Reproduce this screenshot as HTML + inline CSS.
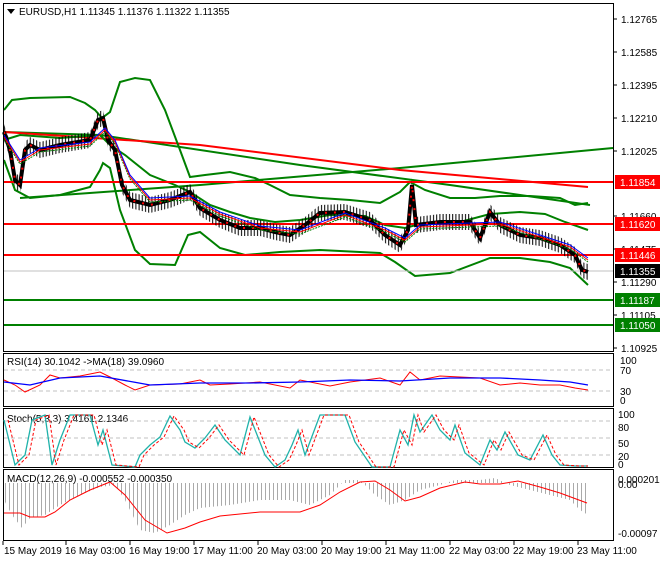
<!DOCTYPE html>
<html><head><meta charset="utf-8">
<style>
html,body{margin:0;padding:0;background:#fff;}
body{width:660px;height:560px;overflow:hidden;}
svg text{font-family:"Liberation Sans",sans-serif;font-size:10px;}
</style></head><body>
<svg width="660" height="560" xmlns="http://www.w3.org/2000/svg">
<defs>
<pattern id="wk" x="0" y="0" width="3.2" height="10" patternUnits="userSpaceOnUse"><rect x="1" y="0" width="1" height="10" fill="#000"/></pattern>
<pattern id="hb" x="0" y="0" width="4" height="10" patternUnits="userSpaceOnUse"><rect x="1" y="0" width="1" height="10" fill="#aaa"/></pattern>
</defs>
<rect width="660" height="560" fill="#fff"/>
<polyline fill="none" stroke="#008000" stroke-width="2" points="4,132 100,135 300,165 450,185 590,205"/>
<polyline fill="none" stroke="#008000" stroke-width="2" points="20,198 200,185 400,168 613,148"/>
<polyline fill="none" stroke="#f00" stroke-width="2" points="4,132 200,145 400,170 588,187"/>
<polyline fill="none" stroke="#008000" stroke-width="2" points="4,110 12,100 30,98 70,97 85,103 95,110 102,118 110,112 120,82 135,78 150,80 165,110 180,150 190,177 205,175 230,172 255,178 270,185 290,195 320,198 350,200 380,203 400,192 410,182 425,190 450,198 475,198 500,196 530,196 560,198 575,205 588,203"/>
<polyline fill="none" stroke="#008000" stroke-width="2" points="4,140 20,135 60,138 100,135 110,145 125,155 150,175 175,185 190,192 210,205 230,212 250,218 275,222 300,220 330,215 365,216 385,225 405,228 420,224 460,222 490,214 520,212 545,214 565,222 588,230"/>
<polyline fill="none" stroke="#008000" stroke-width="2" points="4,160 15,190 30,198 60,195 90,187 100,170 103,163 110,168 120,210 135,250 150,264 175,265 188,235 200,232 220,248 245,255 280,252 320,250 380,253 395,262 415,276 450,273 490,258 520,258 550,262 570,268 588,285"/>
<line x1="3" y1="182" x2="613" y2="182" stroke="#f00" stroke-width="2"/>
<line x1="3" y1="224" x2="613" y2="224" stroke="#f00" stroke-width="2"/>
<line x1="3" y1="255" x2="613" y2="255" stroke="#f00" stroke-width="2"/>
<line x1="3" y1="271" x2="613" y2="271" stroke="#c0c0c0"/>
<line x1="3" y1="300" x2="613" y2="300" stroke="#008000" stroke-width="2"/>
<line x1="3" y1="325" x2="613" y2="325" stroke="#008000" stroke-width="2"/>
<polygon fill="url(#wk)" points="4,124 10,142 15,172 20,177 25,142 30,137 40,142 60,137 90,132 98,112 103,110 108,132 115,142 122,177 130,192 150,197 170,192 190,184 200,200 220,212 240,220 260,220 275,224 290,227 305,217 320,205 345,204 370,212 385,227 400,237 408,222 412,177 416,217 440,214 470,214 480,230 490,204 500,217 520,227 540,230 560,237 575,247 582,262 588,264 588,280 582,278 575,263 560,253 540,246 520,243 500,233 490,220 480,246 470,230 440,230 416,233 412,193 408,238 400,253 385,243 370,228 345,220 320,221 305,233 290,243 275,240 260,236 240,236 220,228 200,216 190,200 170,208 150,213 130,208 122,193 115,158 108,148 103,126 98,128 90,148 60,153 40,158 30,153 25,158 20,193 15,188 10,158 4,140"/>
<polyline fill="none" stroke="#000" stroke-width="4" points="4,132 10,150 15,180 20,185 25,150 30,145 40,150 60,145 90,140 98,120 103,118 108,140 115,150 122,185 130,200 150,205 170,200 190,192 200,208 220,220 240,228 260,228 275,232 290,235 305,225 320,213 345,212 370,220 385,235 400,245 408,230 412,185 416,225 440,222 470,222 480,238 490,212 500,225 520,235 540,238 560,245 575,255 582,270 588,272"/>
<polyline fill="none" stroke="#f00" stroke-width="2" stroke-dasharray="2,7" points="4,132 10,150 15,180 20,185 25,150 30,145 40,150 60,145 90,140 98,120 103,118 108,140 115,150 122,185 130,200 150,205 170,200 190,192 200,208 220,220 240,228 260,228 275,232 290,235 305,225 320,213 345,212 370,220 385,235 400,245 408,230 412,185 416,225 440,222 470,222 480,238 490,212 500,225 520,235 540,238 560,245 575,255 582,270 588,272"/>
<polyline fill="none" stroke="#008000" stroke-dasharray="2,1" points="4,139 20,164 40,152 90,146 105,132 115,144 130,179 150,202 190,200 220,216 260,230 300,234 345,217 385,232 405,242 420,229 470,227 500,226 540,239 570,249 588,262"/>
<polyline fill="none" stroke="#f00" points="4,137 20,162 40,150 90,144 105,130 115,142 130,177 150,200 190,198 220,214 260,228 300,232 345,215 385,230 405,240 420,227 470,225 500,224 540,237 570,247 588,260"/>
<polyline fill="none" stroke="#00f" points="4,135 20,160 40,148 90,142 105,128 115,140 130,175 150,198 190,196 220,212 260,226 300,230 345,213 385,228 405,238 420,225 470,223 500,222 540,235 570,245 588,258"/>
<rect x="3.5" y="3.5" width="610" height="348" fill="none" stroke="#000"/>
<rect x="3.5" y="353.5" width="610" height="53" fill="none" stroke="#000"/>
<rect x="3.5" y="408.5" width="610" height="59" fill="none" stroke="#000"/>
<rect x="3.5" y="469.5" width="610" height="71" fill="none" stroke="#000"/>
<polygon points="7,9 15,9 11,14" fill="#000"/>
<text x="19" y="15" font-size="11">EURUSD,H1  1.11345 1.11376 1.11322 1.11355</text>
<g stroke="#000"><line x1="613" y1="19" x2="617" y2="19"/><line x1="613" y1="52" x2="617" y2="52"/><line x1="613" y1="85" x2="617" y2="85"/><line x1="613" y1="118" x2="617" y2="118"/><line x1="613" y1="151" x2="617" y2="151"/><line x1="613" y1="216" x2="617" y2="216"/><line x1="613" y1="249" x2="617" y2="249"/><line x1="613" y1="282" x2="617" y2="282"/><line x1="613" y1="315" x2="617" y2="315"/><line x1="613" y1="348" x2="617" y2="348"/></g>
<text x="621" y="23">1.12765</text><text x="621" y="56">1.12585</text><text x="621" y="89">1.12395</text><text x="621" y="122">1.12210</text><text x="621" y="155">1.12025</text><text x="621" y="220">1.11660</text><text x="621" y="253">1.11475</text><text x="621" y="286">1.11290</text><text x="621" y="319">1.11105</text><text x="621" y="352">1.10925</text>
<rect x="615" y="175" width="45" height="14" fill="#f00"/><text x="620" y="186" fill="#fff">1.11854</text>
<rect x="615" y="217" width="45" height="14" fill="#f00"/><text x="620" y="228" fill="#fff">1.11620</text>
<rect x="615" y="248" width="45" height="14" fill="#f00"/><text x="620" y="259" fill="#fff">1.11446</text>
<rect x="615" y="264" width="45" height="14" fill="#000"/><text x="620" y="275" fill="#fff">1.11355</text>
<rect x="615" y="293" width="45" height="14" fill="#008000"/><text x="620" y="304" fill="#fff">1.11187</text>
<rect x="615" y="318" width="45" height="14" fill="#008000"/><text x="620" y="329" fill="#fff">1.11050</text>
<text x="7" y="365">RSI(14) 30.1042  -&gt;MA(18) 39.0960</text>
<line x1="4" y1="370" x2="613" y2="370" stroke="#c0c0c0" stroke-dasharray="4,3"/>
<line x1="4" y1="391" x2="613" y2="391" stroke="#c0c0c0" stroke-dasharray="4,3"/>
<polyline fill="none" stroke="#f00" points="4,380 15,385 25,392 40,385 50,375 60,378 80,376 100,372 110,377 125,385 135,390 150,385 180,384 200,380 210,385 230,384 260,382 290,388 300,380 330,386 350,382 380,378 400,385 410,372 420,380 440,376 480,378 500,385 520,383 540,385 560,385 575,388 588,390"/>
<polyline fill="none" stroke="#00f" stroke-width="1.3" points="4,382 30,385 60,378 100,376 150,385 200,383 250,383 300,382 350,380 400,381 450,378 500,378 540,380 570,382 588,385"/>
<text x="620" y="364">100</text><text x="620" y="374">70</text><text x="620" y="395">30</text><text x="620" y="404">0</text>
<text x="7" y="422">Stoch(5,3,3) 3.4161 2.1346</text>
<line x1="4" y1="421" x2="613" y2="421" stroke="#c0c0c0" stroke-dasharray="4,3"/>
<line x1="4" y1="438" x2="613" y2="438" stroke="#c0c0c0" stroke-dasharray="4,3"/>
<line x1="4" y1="455" x2="613" y2="455" stroke="#c0c0c0" stroke-dasharray="4,3"/>
<polyline fill="none" stroke="#20b2aa" stroke-width="1.3" points="4,420 15,465 25,455 32,420 45,415 52,465 60,440 70,415 90,415 98,445 103,430 112,465 135,467 140,455 150,445 160,437 170,416 180,430 185,442 195,448 205,438 215,425 225,440 240,455 250,417 265,455 275,467 285,460 292,445 298,430 305,455 320,415 345,415 355,442 372,467 390,467 400,430 408,445 414,415 420,432 432,415 440,430 450,440 455,425 465,453 480,465 490,440 497,450 505,432 518,455 530,460 543,435 552,455 560,465 575,466 588,466"/>
<polyline fill="none" stroke="#f00" stroke-dasharray="3,2" points="8,420 19,465 29,455 36,420 49,415 56,465 64,440 74,415 94,415 102,445 107,430 116,465 139,467 144,455 154,445 164,437 174,416 184,430 189,442 199,448 209,438 219,425 229,440 244,455 254,417 269,455 279,467 289,460 296,445 302,430 309,455 324,415 349,415 359,442 376,467 394,467 404,430 412,445 418,415 424,432 436,415 444,430 454,440 459,425 469,453 484,465 494,440 501,450 509,432 522,455 534,460 547,435 556,455 564,465 579,466 588,466"/>
<text x="618" y="418">100</text><text x="618" y="431">80</text><text x="618" y="447">50</text><text x="618" y="460">20</text><text x="618" y="468">0</text>
<polygon fill="url(#hb)" points="4,483 588,483 588,515 580,510 570,500 550,495 530,490 510,485 495,478 480,480 455,480 440,485 420,490 405,500 390,505 375,495 360,480 345,480 330,495 310,505 290,500 260,500 230,505 200,508 185,515 170,525 155,533 140,530 125,500 115,485 100,487 80,495 60,505 45,515 30,518 22,528 12,515 4,500"/>
<polyline fill="none" stroke="#f00" points="4,513 20,513 30,517 45,517 55,512 70,500 90,490 110,482 125,495 145,520 167,533 185,528 200,522 220,516 260,512 300,512 320,505 340,492 360,482 375,481 390,490 405,501 420,497 440,488 465,482 480,484 500,484 518,481 540,487 560,493 587,503"/>
<text x="7" y="482">MACD(12,26,9) -0.000552 -0.000350</text>
<text x="618" y="483">0.000201</text><text x="618" y="488">0.00</text><text x="618" y="537">-0.00097</text>
<g stroke="#000"><line x1="3" y1="541" x2="3" y2="545"/><line x1="66" y1="541" x2="66" y2="545"/><line x1="130" y1="541" x2="130" y2="545"/><line x1="194" y1="541" x2="194" y2="545"/><line x1="258" y1="541" x2="258" y2="545"/><line x1="322" y1="541" x2="322" y2="545"/><line x1="386" y1="541" x2="386" y2="545"/><line x1="450" y1="541" x2="450" y2="545"/><line x1="514" y1="541" x2="514" y2="545"/><line x1="578" y1="541" x2="578" y2="545"/></g>
<text x="4" y="554">15 May 2019</text><text x="65" y="554">16 May 03:00</text><text x="129" y="554">16 May 19:00</text><text x="193" y="554">17 May 11:00</text><text x="257" y="554">20 May 03:00</text><text x="321" y="554">20 May 19:00</text><text x="385" y="554">21 May 11:00</text><text x="449" y="554">22 May 03:00</text><text x="513" y="554">22 May 19:00</text><text x="577" y="554">23 May 11:00</text>
</svg>
</body></html>
